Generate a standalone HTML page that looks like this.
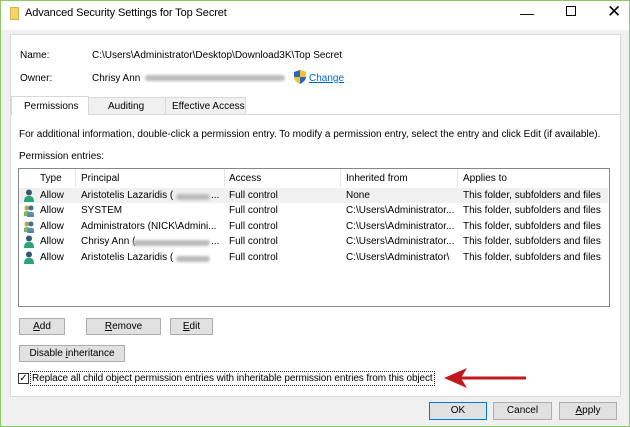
<!DOCTYPE html>
<html><head><meta charset="utf-8"><style>
*{margin:0;padding:0;box-sizing:border-box}
body{width:630px;height:427px;overflow:hidden;background:#fff;font-family:"Liberation Sans",sans-serif;font-size:10px;color:#000;position:relative}
.a{position:absolute;white-space:nowrap}
.win{position:absolute;left:0;top:0;width:630px;height:427px;border:1px solid #8cc866;background:#f0f0f0}
.btn{position:absolute;background:#e1e1e1;border:1px solid #adadad;text-align:center;line-height:15px;font-size:10px}
.blur{position:absolute;height:6px;background:#bbb;border-radius:3px;filter:blur(1.2px)}
.row{position:absolute;left:19px;width:589px;height:15px}
.row span{position:absolute;top:2px;white-space:nowrap}
.ic{position:absolute;left:5px;top:1px;width:10px;height:13px}
</style></head><body>
<div class="win"></div>
<div class="a" style="left:1px;top:1px;width:628px;height:29px;background:#fff"></div>
<div class="a" style="left:10px;top:7px;width:9px;height:13px;background:#f4d36b;border:1px solid #d9b24a"></div>
<div class="a" style="left:25px;top:7px;font-size:11px;letter-spacing:-0.1px">Advanced Security Settings for Top Secret</div>
<div class="a" style="left:520px;top:5px;font-size:14px">—</div>
<div class="a" style="left:566px;top:6px;width:10px;height:10px;border:1px solid #000"></div>
<div class="a" style="left:607px;top:2px;font-size:17px">✕</div>
<div class="a" style="left:10px;top:34px;width:611px;height:363px;background:#fff;border:1px solid #d9d9d9"></div>
<div class="a" style="left:20px;top:50px">Name:</div>
<div class="a" style="left:92px;top:50px">C:\Users\Administrator\Desktop\Download3K\Top Secret</div>
<div class="a" style="left:20px;top:73px">Owner:</div>
<div class="a" style="left:92px;top:73px">Chrisy Ann</div>
<div class="blur" style="left:145px;top:75px;width:140px"></div>
<svg class="a" style="left:294px;top:70px" width="12" height="14" viewBox="0 0 12 14"><path d="M6 0L12 2V7C12 10 9 12.5 6 14 3 12.5 0 10 0 7V2Z" fill="#2c65c4"/><path d="M6 0V7H12V2ZM6 7H0C0 10 3 12.5 6 14Z" fill="#f6c42c"/></svg>
<div class="a" style="left:309px;top:73px;color:#0066cc;text-decoration:underline">Change</div>
<div class="a" style="left:11px;top:114px;width:609px;height:283px;border-top:1px solid #d9d9d9"></div>
<div class="a" style="left:88px;top:97px;width:78px;height:18px;background:#f0f0f0;border:1px solid #d9d9d9"></div>
<div class="a" style="left:165px;top:97px;width:81px;height:18px;background:#f0f0f0;border:1px solid #d9d9d9"></div>
<div class="a" style="left:11px;top:96px;width:78px;height:19px;background:#fff;border:1px solid #d9d9d9;border-bottom:none"></div>
<div class="a" style="left:24px;top:101px">Permissions</div>
<div class="a" style="left:108px;top:101px">Auditing</div>
<div class="a" style="left:172px;top:101px">Effective Access</div>
<div class="a" style="left:19px;top:129px">For additional information, double-click a permission entry. To modify a permission entry, select the entry and click Edit (if available).</div>
<div class="a" style="left:19px;top:151px">Permission entries:</div>
<div class="a" style="left:18px;top:168px;width:592px;height:139px;border:1px solid #828790;background:#fff"></div>
<div class="a" style="left:75px;top:169px;height:18px;border-left:1px solid #e5e5e5"></div>
<div class="a" style="left:224px;top:169px;height:18px;border-left:1px solid #e5e5e5"></div>
<div class="a" style="left:340px;top:169px;height:18px;border-left:1px solid #e5e5e5"></div>
<div class="a" style="left:457px;top:169px;height:18px;border-left:1px solid #e5e5e5"></div>
<div class="a" style="left:40px;top:173px">Type</div>
<div class="a" style="left:81px;top:173px">Principal</div>
<div class="a" style="left:229px;top:173px">Access</div>
<div class="a" style="left:346px;top:173px">Inherited from</div>
<div class="a" style="left:463px;top:173px">Applies to</div>
<div class="row" style="top:188px;background:#f0f0f0"><svg class="ic" viewBox="0 0 10 13"><circle cx="5" cy="3.5" r="3" fill="#355a6e"/><path d="M0 13C0 8 2 7 5 7S10 8 10 13Z" fill="#2aa37a"/></svg><span style="left:21px">Allow</span><span style="left:62px">Aristotelis Lazaridis (</span><span style="left:192px">...</span><span style="left:210px">Full control</span><span style="left:327px">None</span><span style="left:444px">This folder, subfolders and files</span></div>
<div class="blur" style="left:176px;top:194px;width:34px"></div>
<div class="row" style="top:203px"><svg class="ic" viewBox="0 0 10 13"><circle cx="3" cy="4" r="2.5" fill="#b7a25a"/><path d="M-1 12C-1 8 1 7 3 7S7 8 7 12Z" fill="#7ab55c"/><circle cx="7" cy="4" r="2.5" fill="#3b6d9a"/><path d="M3 13C3 9 5 8 7 8S11 9 11 13Z" fill="#5a86c0"/></svg><span style="left:21px">Allow</span><span style="left:62px">SYSTEM</span><span style="left:210px">Full control</span><span style="left:327px">C:\Users\Administrator...</span><span style="left:444px">This folder, subfolders and files</span></div>
<div class="row" style="top:219px"><svg class="ic" viewBox="0 0 10 13"><circle cx="3" cy="4" r="2.5" fill="#b7a25a"/><path d="M-1 12C-1 8 1 7 3 7S7 8 7 12Z" fill="#7ab55c"/><circle cx="7" cy="4" r="2.5" fill="#3b6d9a"/><path d="M3 13C3 9 5 8 7 8S11 9 11 13Z" fill="#5a86c0"/></svg><span style="left:21px">Allow</span><span style="left:62px">Administrators (NICK\Admini...</span><span style="left:210px">Full control</span><span style="left:327px">C:\Users\Administrator...</span><span style="left:444px">This folder, subfolders and files</span></div>
<div class="row" style="top:234px"><svg class="ic" viewBox="0 0 10 13"><circle cx="5" cy="3.5" r="3" fill="#355a6e"/><path d="M0 13C0 8 2 7 5 7S10 8 10 13Z" fill="#2aa37a"/></svg><span style="left:21px">Allow</span><span style="left:62px">Chrisy Ann (</span><span style="left:192px">...</span><span style="left:210px">Full control</span><span style="left:327px">C:\Users\Administrator...</span><span style="left:444px">This folder, subfolders and files</span></div>
<div class="blur" style="left:133px;top:240px;width:77px"></div>
<div class="row" style="top:250px"><svg class="ic" viewBox="0 0 10 13"><circle cx="5" cy="3.5" r="3" fill="#355a6e"/><path d="M0 13C0 8 2 7 5 7S10 8 10 13Z" fill="#2aa37a"/></svg><span style="left:21px">Allow</span><span style="left:62px">Aristotelis Lazaridis (</span><span style="left:210px">Full control</span><span style="left:327px">C:\Users\Administrator\</span><span style="left:444px">This folder, subfolders and files</span></div>
<div class="blur" style="left:176px;top:256px;width:34px"></div>
<div class="btn" style="left:19px;top:318px;width:46px;height:17px"><u>A</u>dd</div>
<div class="btn" style="left:86px;top:318px;width:75px;height:17px"><u>R</u>emove</div>
<div class="btn" style="left:170px;top:318px;width:43px;height:17px"><u>E</u>dit</div>
<div class="btn" style="left:19px;top:345px;width:106px;height:17px">Disable <u>i</u>nheritance</div>
<div class="a" style="left:18px;top:373px;width:11px;height:11px;border:1px solid #333;background:#fff;font-size:10px;line-height:9px;text-align:center">✓</div>
<div class="a" style="left:30px;top:371px;border:1px dotted #333;padding:0 1px;line-height:13px;letter-spacing:-0.1px">Replace all child object permission entries with inheritable permission entries from this object</div>
<svg class="a" style="left:444px;top:367px" width="84" height="22" viewBox="0 0 84 22"><path d="M14 11H82" stroke="#c0181e" stroke-width="3"/><path d="M0 11L23 1 17 11 23 21Z" fill="#c0181e"/></svg>
<div class="btn" style="left:429px;top:402px;width:58px;height:18px;border:1px solid #0078d7;line-height:16px">OK</div>
<div class="btn" style="left:493px;top:402px;width:59px;height:18px;line-height:16px">Cancel</div>
<div class="btn" style="left:559px;top:402px;width:58px;height:18px;line-height:16px"><u>A</u>pply</div>
</body></html>
